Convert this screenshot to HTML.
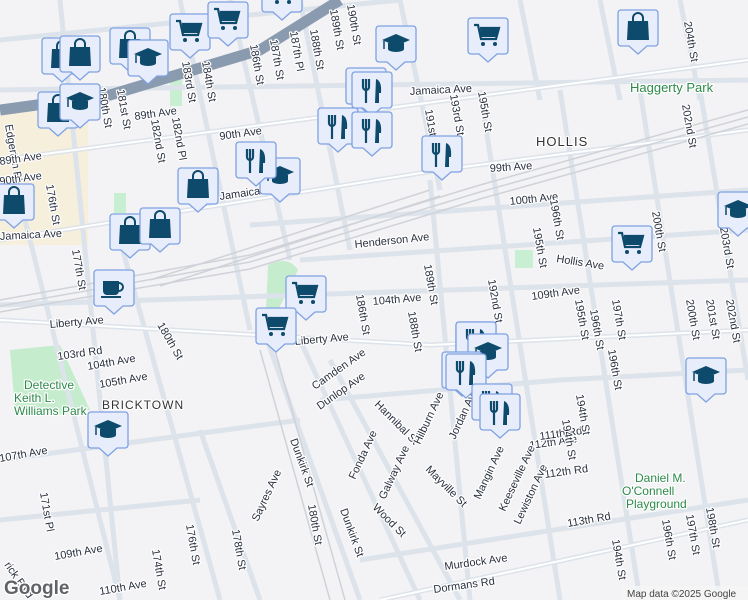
<!DOCTYPE html>
<html><head><meta charset="utf-8"><style>
html,body{margin:0;padding:0;width:748px;height:600px;overflow:hidden;background:#f3f2f5}
svg{display:block}
text{font-family:"Liberation Sans",sans-serif;font-size:11px;fill:#2a3040;stroke:#fff;stroke-width:2.5px;paint-order:stroke;stroke-linejoin:round}
</style></head><body>
<svg width="748" height="600" viewBox="0 0 748 600">
<defs>
<g id="box"><path d="M-17,-44h34a3,3 0 0 1 3,3v30a3,3 0 0 1 -3,3h-8l-9,8l-9,-8h-8a3,3 0 0 1 -3,-3v-30a3,3 0 0 1 3,-3z" fill="#e7edfb" stroke="#7fa2e2" stroke-width="1.3"/></g>
<g id="bag"><use href="#box"/><path d="M-10,-33h20l1,19h-22z" fill="#0d4a6b"/><path d="M-5,-32v-4a5,5 0 0 1 10,0v4" fill="none" stroke="#0d4a6b" stroke-width="2"/></g>
<g id="cart"><use href="#box"/><path d="M-14,-37h4l3,14h15l3,-11h-19" fill="none" stroke="#0d4a6b" stroke-width="2.2"/><path d="M-8,-33h18l-2,8h-15z" fill="#0d4a6b"/><circle cx="-5" cy="-18" r="2" fill="#0d4a6b"/><circle cx="7" cy="-18" r="2" fill="#0d4a6b"/></g>
<g id="cap"><use href="#box"/><path d="M-14,-30l14,-6l14,6l-14,6z" fill="#0d4a6b"/><path d="M-8,-27v6a8,3 0 0 0 16,0v-6" fill="#0d4a6b"/><path d="M-12,-29v8" stroke="#0d4a6b" stroke-width="1.5"/></g>
<g id="fork"><use href="#box"/><path d="M-9,-37v8a3,3 0 0 0 6,0v-8M-6,-37v8M-6,-29v16" fill="none" stroke="#0d4a6b" stroke-width="2.2"/><path d="M4,-37q6,2 5,14h-2v10h-4z" fill="#0d4a6b"/></g>
<g id="cup"><use href="#box"/><path d="M-11,-33h16v10a4,4 0 0 1 -4,4h-8a4,4 0 0 1 -4,-4z" fill="#0d4a6b"/><path d="M5,-31a4,4 0 0 1 0,8" fill="none" stroke="#0d4a6b" stroke-width="2"/><path d="M-13,-17h20" stroke="#0d4a6b" stroke-width="2"/></g>
</defs>
<path d="M0,110 L88,112 L88,245 L0,245z" fill="#f6efdc"/>
<rect x="170" y="80" width="12" height="26" fill="#c9efd2"/>
<rect x="114" y="193" width="12" height="20" fill="#c9efd2"/>
<path d="M10,350 L60,345 L90,410 L55,415 L15,410z" fill="#c6ecce"/>
<path d="M268,265 q20,-10 30,5 l-20,40 l-12,0z" fill="#c6ecce"/>
<rect x="400" y="30" width="14" height="28" fill="#c9efd2"/>
<rect x="515" y="250" width="18" height="18" fill="#c9efd2"/>
<g stroke="#dde3ea" stroke-width="5" fill="none">
<path d="M0,160 L748,60"/><path d="M0,240 L440,170 L748,130"/><path d="M0,305 L748,280"/>
<path d="M0,320 L430,345 L748,330"/><path d="M320,400 L560,380 L748,370"/>
<path d="M380,600 L748,520"/><path d="M360,560 L748,500"/><path d="M0,90 L748,80"/>
<path d="M260,320 L360,600"/><path d="M300,340 L420,600"/><path d="M430,180 L470,600"/>
<path d="M480,90 L560,600"/><path d="M560,90 L640,600"/><path d="M640,90 L720,600"/>
<path d="M700,90 L748,380"/><path d="M20,200 L120,600"/><path d="M120,240 L220,600"/>
<path d="M180,0 L250,330"/><path d="M230,0 L290,260"/><path d="M300,0 L350,250"/>
<path d="M400,0 L440,190"/><path d="M200,430 L260,600"/><path d="M0,460 L300,420"/>
<path d="M0,520 L200,500"/><path d="M330,360 L460,600"/><path d="M60,0 L120,600"/>
<path d="M520,0 L540,100"/><path d="M600,0 L620,100"/><path d="M680,0 L700,100"/>
<path d="M0,40 L400,0"/><path d="M250,225 L748,190"/><path d="M300,260 L748,230"/>
</g>
<g stroke="#ffffff" stroke-width="2" fill="none">
<path d="M0,240 L440,170 L748,130"/><path d="M0,320 L430,345 L748,330"/><path d="M0,160 L748,60"/><path d="M380,600 L748,520"/>
</g>
<g stroke="#cfd3d9" stroke-width="1.5" fill="none">
<path d="M0,300 L250,255 L480,185 L748,110"/><path d="M0,306 L250,262 L480,192 L748,117"/><path d="M0,312 L250,269 L480,199 L748,124"/>
<path d="M150,280 L430,190"/><path d="M160,286 L440,196"/><path d="M260,350 L330,600"/><path d="M275,350 L345,600"/>
</g>
<path d="M0,110 L110,95 L260,50 L340,0" stroke="#8a9bb0" stroke-width="11" fill="none"/>
<g>
<text x="410" y="95" transform="rotate(-3 410 95)">Jamaica Ave</text>
<text x="630" y="92" style="fill:#2c8a4a;font-size:13px">Haggerty Park</text>
<text x="536" y="146" style="font-size:13px;letter-spacing:1px;fill:#333">HOLLIS</text>
<text x="490" y="172" transform="rotate(-4 490 172)">99th Ave</text>
<text x="510" y="205" transform="rotate(-6 510 205)">100th Ave</text>
<text x="355" y="248" transform="rotate(-6 355 248)">Henderson Ave</text>
<text x="556" y="262" transform="rotate(9 556 262)">Hollis Ave</text>
<text x="373" y="305" transform="rotate(-5 373 305)">104th Ave</text>
<text x="295" y="345" transform="rotate(-5 295 345)">Liberty Ave</text>
<text x="50" y="328" transform="rotate(-5 50 328)">Liberty Ave</text>
<text x="58" y="360" transform="rotate(-8 58 360)">103rd Rd</text>
<text x="88" y="370" transform="rotate(-10 88 370)">104th Ave</text>
<text x="100" y="388" transform="rotate(-10 100 388)">105th Ave</text>
<text x="102" y="409" style="font-size:12px;letter-spacing:1px;fill:#333">BRICKTOWN</text>
<text x="24" y="389" style="font-size:12px;fill:#2c8a4a">Detective</text>
<text x="14" y="402" style="font-size:12px;fill:#2c8a4a">Keith L.</text>
<text x="14" y="415" style="font-size:12px;fill:#2c8a4a">Williams Park</text>
<text x="635" y="482" style="font-size:12px;fill:#2c8a4a">Daniel M.</text>
<text x="622" y="495" style="font-size:12px;fill:#2c8a4a">O'Connell</text>
<text x="626" y="508" style="font-size:12px;fill:#2c8a4a">Playground</text>
<text x="0" y="240" transform="rotate(-3 0 240)">Jamaica Ave</text>
<text x="220" y="200" transform="rotate(-8 220 200)">Jamaica Ave</text>
<text x="445" y="570" transform="rotate(-8 445 570)">Murdock Ave</text>
<text x="434" y="593" transform="rotate(-8 434 593)">Dormans Rd</text>
<text x="568" y="527" transform="rotate(-10 568 527)">113th Rd</text>
<text x="530" y="449" transform="rotate(-8 530 449)">112th Ave</text>
<text x="545" y="478" transform="rotate(-8 545 478)">112th Rd</text>
<text x="540" y="440" transform="rotate(-8 540 440)">111th Rd</text>
<text x="532" y="300" transform="rotate(-8 532 300)">109th Ave</text>
<text x="290" y="440" transform="rotate(70 290 440)">Dunkirk St</text>
<text x="340" y="510" transform="rotate(70 340 510)">Dunkirk St</text>
<text x="315" y="390" transform="rotate(-35 315 390)">Camden Ave</text>
<text x="320" y="410" transform="rotate(-35 320 410)">Dunlop Ave</text>
<text x="374" y="405" transform="rotate(45 374 405)">Hannibal St</text>
<text x="355" y="480" transform="rotate(-65 355 480)">Fonda Ave</text>
<text x="385" y="500" transform="rotate(-65 385 500)">Galway Ave</text>
<text x="420" y="445" transform="rotate(-65 420 445)">Hilburn Ave</text>
<text x="425" y="470" transform="rotate(45 425 470)">Mayville St</text>
<text x="372" y="508" transform="rotate(45 372 508)">Wood St</text>
<text x="480" y="500" transform="rotate(-65 480 500)">Mangin Ave</text>
<text x="505" y="512" transform="rotate(-65 505 512)">Keeseville Ave</text>
<text x="520" y="525" transform="rotate(-65 520 525)">Lewiston Ave</text>
<text x="455" y="440" transform="rotate(-65 455 440)">Jordan Ave</text>
<text x="258" y="522" transform="rotate(-65 258 522)">Sayres Ave</text>
<text x="0" y="462" transform="rotate(-10 0 462)">107th Ave</text>
<text x="55" y="560" transform="rotate(-10 55 560)">109th Ave</text>
<text x="100" y="595" transform="rotate(-10 100 595)">110th Ave</text>
<text x="5" y="125" transform="rotate(80 5 125)">Edgerton Blvd</text>
<text x="0" y="165" transform="rotate(-8 0 165)">89th Ave</text>
<text x="0" y="185" transform="rotate(-8 0 185)">90th Ave</text>
<text x="135" y="120" transform="rotate(-8 135 120)">89th Ave</text>
<text x="220" y="140" transform="rotate(-8 220 140)">90th Ave</text>
</g>
<g>
<text x="98" y="88" transform="rotate(80 98 88)">180th St</text>
<text x="117" y="90" transform="rotate(80 117 90)">181st St</text>
<text x="151" y="120" transform="rotate(80 151 120)">182nd St</text>
<text x="172" y="118" transform="rotate(80 172 118)">182nd Pl</text>
<text x="182" y="62" transform="rotate(80 182 62)">183rd St</text>
<text x="202" y="62" transform="rotate(80 202 62)">184th St</text>
<text x="250" y="45" transform="rotate(80 250 45)">186th St</text>
<text x="270" y="40" transform="rotate(80 270 40)">187th St</text>
<text x="290" y="32" transform="rotate(80 290 32)">187th Pl</text>
<text x="310" y="30" transform="rotate(80 310 30)">188th St</text>
<text x="330" y="10" transform="rotate(80 330 10)">189th St</text>
<text x="347" y="5" transform="rotate(80 347 5)">190th St</text>
<text x="46" y="185" transform="rotate(80 46 185)">176th St</text>
<text x="72" y="250" transform="rotate(80 72 250)">177th St</text>
<text x="425" y="110" transform="rotate(80 425 110)">191st</text>
<text x="450" y="95" transform="rotate(80 450 95)">193rd St</text>
<text x="478" y="92" transform="rotate(80 478 92)">195th St</text>
<text x="550" y="200" transform="rotate(80 550 200)">196th St</text>
<text x="533" y="228" transform="rotate(80 533 228)">195th St</text>
<text x="356" y="295" transform="rotate(80 356 295)">186th St</text>
<text x="408" y="312" transform="rotate(80 408 312)">188th St</text>
<text x="424" y="265" transform="rotate(80 424 265)">189th St</text>
<text x="488" y="280" transform="rotate(80 488 280)">192nd St</text>
<text x="575" y="300" transform="rotate(80 575 300)">195th St</text>
<text x="590" y="310" transform="rotate(80 590 310)">196th St</text>
<text x="612" y="300" transform="rotate(80 612 300)">197th St</text>
<text x="608" y="350" transform="rotate(80 608 350)">196th St</text>
<text x="652" y="212" transform="rotate(80 652 212)">200th St</text>
<text x="686" y="300" transform="rotate(80 686 300)">200th St</text>
<text x="706" y="300" transform="rotate(80 706 300)">201st St</text>
<text x="726" y="300" transform="rotate(80 726 300)">202nd St</text>
<text x="682" y="105" transform="rotate(80 682 105)">202nd St</text>
<text x="684" y="22" transform="rotate(80 684 22)">204th St</text>
<text x="720" y="228" transform="rotate(80 720 228)">203rd St</text>
<text x="576" y="395" transform="rotate(80 576 395)">194th St</text>
<text x="562" y="420" transform="rotate(80 562 420)">194th St</text>
<text x="662" y="520" transform="rotate(80 662 520)">196th St</text>
<text x="686" y="515" transform="rotate(80 686 515)">197th St</text>
<text x="706" y="508" transform="rotate(80 706 508)">198th St</text>
<text x="612" y="540" transform="rotate(80 612 540)">194th St</text>
<text x="157" y="325" transform="rotate(60 157 325)">180th St</text>
<text x="186" y="525" transform="rotate(80 186 525)">176th St</text>
<text x="152" y="550" transform="rotate(80 152 550)">174th St</text>
<text x="232" y="530" transform="rotate(80 232 530)">178th St</text>
<text x="308" y="505" transform="rotate(80 308 505)">180th St</text>
<text x="40" y="493" transform="rotate(80 40 493)">171st Pl</text>
<text x="4" y="565" transform="rotate(55 4 565)">rick Blvd</text>
</g>
<use href="#bag" x="62" y="82"/><use href="#bag" x="80" y="80"/><use href="#bag" x="58" y="136"/>
<use href="#bag" x="14" y="228"/><use href="#bag" x="130" y="258"/><use href="#bag" x="160" y="252"/>
<use href="#bag" x="198" y="212"/><use href="#bag" x="130" y="72"/><use href="#bag" x="638" y="54"/>
<use href="#cap" x="148" y="84"/><use href="#cap" x="80" y="128"/>
<use href="#cart" x="190" y="58"/><use href="#cart" x="228" y="46"/><use href="#cart" x="282" y="20"/>
<use href="#cart" x="488" y="62"/><use href="#cart" x="632" y="270"/><use href="#cart" x="306" y="320"/>
<use href="#cart" x="276" y="352"/>
<use href="#cap" x="396" y="70"/><use href="#cap" x="738" y="236"/><use href="#cap" x="706" y="402"/>
<use href="#cap" x="108" y="456"/><use href="#cap" x="280" y="202"/><use href="#cap" x="366" y="112"/>
<use href="#fork" x="256" y="186"/><use href="#fork" x="338" y="152"/><use href="#fork" x="372" y="116"/>
<use href="#fork" x="372" y="156"/><use href="#fork" x="442" y="180"/>
<use href="#cart" x="476" y="366"/><use href="#fork" x="476" y="366"/><use href="#cap" x="488" y="378"/>
<use href="#cart" x="462" y="396"/><use href="#fork" x="466" y="398"/>
<use href="#fork" x="492" y="428"/><use href="#fork" x="500" y="438"/>
<use href="#cup" x="114" y="314"/>
<text x="4" y="594" style="font-size:19px;fill:#5f6368;font-weight:bold">Google</text>
<rect x="622" y="586" width="126" height="14" fill="#f5f5f5" opacity="0.8"/>
<text x="627" y="597" style="font-size:10px;fill:#444;stroke:none">Map data ©2025 Google</text>
</svg>
</body></html>
